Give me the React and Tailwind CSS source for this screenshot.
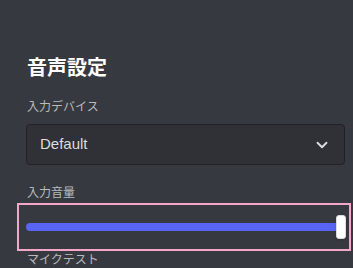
import { ChevronDown } from "lucide-react";

function VolumeSlider() {
    return (
        <div className="-ml-[9px] flex h-[48px] w-[334px] items-center border-2 border-[#f4a7c7] pl-[7px]">
            <div className="relative h-[8px] w-[314px] rounded-full bg-[#5865f2]">
                <div className="absolute -top-[8px] left-[310px] h-[24px] w-[10px] rounded-[3px] border border-[#dcddde] bg-white shadow" />
            </div>
        </div>
    );
}

export default function App() {
    return (
        <div
            className="h-[268px] w-[353px] overflow-hidden bg-[#36393f] pl-[26px]"
            style={{ fontFamily: '"Liberation Sans", "Noto Sans CJK JP", sans-serif' }}
        >
            <h2 className="pl-px pt-[54px] text-[20px] font-bold leading-[28px] text-white">音声設定</h2>

            <div className="mt-[17px] pl-px text-[12px] leading-[16px] text-[#b9bbbe]">入力デバイス</div>
            <div className="mt-[9px] flex h-[41px] w-[319px] items-center justify-between rounded-[4px] border border-[#202225] bg-[#2f3136] pl-[13px] pr-[13px]">
                <span className="text-[15px] text-[#dcddde]">Default</span>
                <ChevronDown className="h-[18px] w-[18px] text-[#dcddde]" strokeWidth={2.5} />
            </div>

            <div className="mt-[20px] pl-px text-[12px] leading-[16px] text-[#b9bbbe]">入力音量</div>
            <div className="mt-[2px]">
                <VolumeSlider />
            </div>
            <div className="mt-[1px] pl-px text-[12px] leading-[16px] text-[#b9bbbe]">マイクテスト</div>
        </div>
    );
}
